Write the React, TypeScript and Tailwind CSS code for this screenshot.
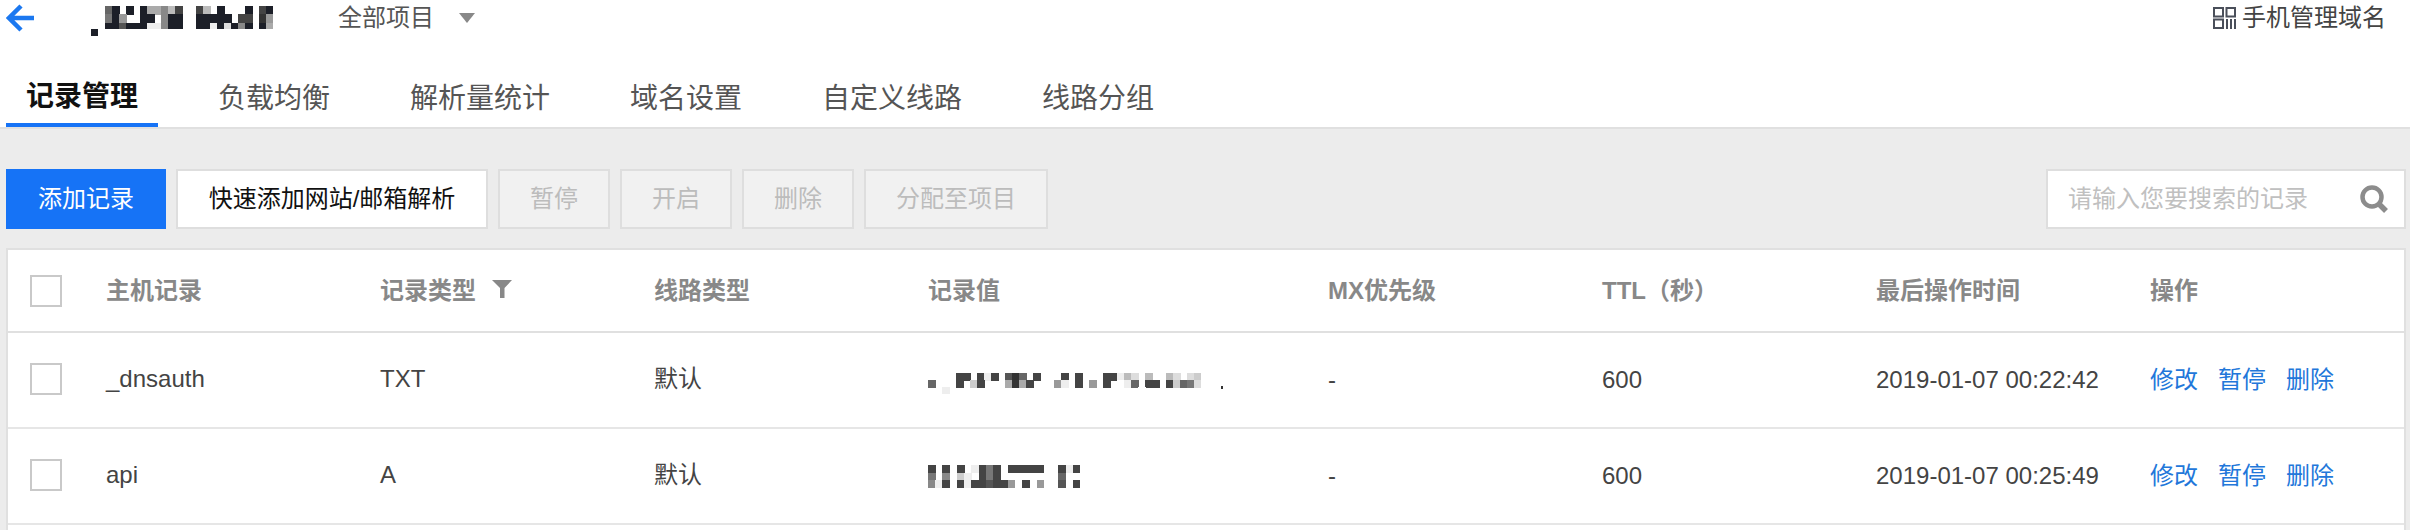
import React from "react";

const tabs = ["记录管理", "负载均衡", "解析量统计", "域名设置", "自定义线路", "线路分组"];

const gridCols =
  "grid grid-cols-[98px_274px_274px_274px_400px_274px_274px_274px_1fr] items-center";

// blurred-out values from the screenshot: one char per mosaic cell, hex digit = grey level
const nameMosaic = [
  "6x.x.xaa8b4..4b.x...x.4x",
  "7x9..xx.8xx..xxxxx.44.39",
  "xx5xxxee8xx..xxexdx8x.xa",
];
const value1Mosaic = [
  "....44.4e4.536.4..f4.4...44ebd.b..bd.dc",
  "6...4.c4...a3a4...9e.4.9.4.fe6.44.4c67d",
  "..e...........................f",
];
const value2Mosaic = [
  "4.4.4.e474.44444..4e4",
  "7.8.ce.474........6..",
  "8e4.4e445449.4.9..5.4",
];

function Mosaic({
  rows,
  cellW,
  cellH,
  className,
}: {
  rows: string[];
  cellW: number;
  cellH: number;
  className?: string;
}) {
  const cols = Math.max(...rows.map((r) => r.length));
  return (
    <svg
      width={cols * cellW}
      height={rows.length * cellH}
      className={className}
      shapeRendering="crispEdges"
    >
      {rows.map((row, y) =>
        row.split("").map((c, x) => {
          if (c === ".") return null;
          const fill = c === "x" ? "#1c1f28" : `#${c}${c}${c}`;
          return (
            <rect
              key={`${x}-${y}`}
              x={x * cellW}
              y={y * cellH}
              width={cellW + 0.5}
              height={cellH + 0.5}
              fill={fill}
            />
          );
        })
      )}
    </svg>
  );
}

function Checkbox() {
  return <div className="ml-[22px] h-8 w-8 border-2 border-[#c9c9c9] bg-white" />;
}

function ToolButton({ label, width }: { label: string; width: string }) {
  return (
    <div
      className={`flex h-[60px] items-center justify-center border-2 border-[#dedede] bg-[#f1f1f1] text-[#bcbcbc] ${width}`}
    >
      {label}
    </div>
  );
}

function Row({
  host,
  type,
  value,
  time,
}: {
  host: string;
  type: string;
  value: React.ReactNode;
  time: string;
}) {
  return (
    <div className={`${gridCols} h-24 border-b-2 border-[#e6e6e6] pb-[3px] text-[#444]`}>
      <Checkbox />
      <div>{host}</div>
      <div>{type}</div>
      <div>默认</div>
      <div>{value}</div>
      <div className="pt-[2px]">-</div>
      <div className="pt-[2px]">600</div>
      <div className="pt-[2px]">{time}</div>
      <div className="flex gap-5 pt-[2px] text-[#2277da]">
        <span>修改</span>
        <span>暂停</span>
        <span>删除</span>
      </div>
    </div>
  );
}

export default function App() {
  return (
    <div
      className="flex h-[530px] flex-col overflow-hidden bg-white text-2xl leading-8"
      style={{ fontFamily: '"Liberation Sans", "Noto Sans CJK SC", sans-serif' }}
    >
      {/* top bar */}
      <div className="flex h-9 items-center justify-between pr-6">
        <div className="flex items-center">
          <svg width="30" height="28" viewBox="0 0 30 28" className="ml-[6px]" fill="none">
            <path
              d="M15 2 L3 14 L15 26 M3 14 H28"
              stroke="#1b78f0"
              strokeWidth="4.5"
            />
          </svg>
          <div className="ml-[55px] flex h-9 w-[193px] flex-col items-start">
            <Mosaic rows={nameMosaic} cellW={7} cellH={8.3} className="ml-[14px] mt-[6px]" />
            <div className="h-2 w-[7px] bg-[#1c1f28]" />
          </div>
          <span className="ml-[54px] text-[#555]">全部项目</span>
          <svg width="16" height="10" viewBox="0 0 16 10" className="ml-[25px]">
            <path d="M0 0 H16 L8 10 Z" fill="#888" />
          </svg>
        </div>
        <div className="flex items-center gap-[6px] text-[#444]">
          <svg width="23" height="22" viewBox="0 0 23 22" fill="none" stroke="#4a4f5a" strokeWidth="2">
            <rect x="1" y="1" width="9" height="8.5" />
            <rect x="13.5" y="1" width="8.5" height="8.5" />
            <rect x="1" y="12.5" width="9" height="8.5" />
            <path d="M14 12 V22 M18 12 V22 M22 12 V22" />
          </svg>
          <span>手机管理域名</span>
        </div>
      </div>

      {/* tabs */}
      <div className="mt-[30px] flex h-[63px] gap-10 border-b-2 border-[#e0e0e0] pl-[6px]">
        {tabs.map((tab, i) => (
          <div
            key={tab}
            className={
              i === 0
                ? "flex h-[61px] items-center border-b-4 border-[#1673f6] px-5 pt-1 text-[28px] font-bold text-[#111]"
                : "flex h-[61px] items-center px-5 pt-1 text-[28px] text-[#555]"
            }
          >
            {tab}
          </div>
        ))}
      </div>

      {/* toolbar + table */}
      <div className="flex flex-1 flex-col bg-[#ececec] px-[4px]">
        <div className="flex items-center justify-between pb-[19px] pl-[2px] pt-10">
          <div className="flex gap-[10px]">
            <div className="flex h-[60px] w-40 items-center justify-center bg-[#1673f6] text-white">
              添加记录
            </div>
            <div className="flex h-[60px] w-[312px] items-center justify-center border-2 border-[#dedede] bg-white text-[#111]">
              快速添加网站/邮箱解析
            </div>
            <ToolButton label="暂停" width="w-[112px]" />
            <ToolButton label="开启" width="w-[112px]" />
            <ToolButton label="删除" width="w-[112px]" />
            <ToolButton label="分配至项目" width="w-[184px]" />
          </div>
          <div className="flex h-[60px] w-[360px] items-center border-2 border-[#dedede] bg-white pl-5 pr-4">
            <input
              placeholder="请输入您要搜索的记录"
              className="min-w-0 flex-1 bg-transparent outline-none placeholder:text-[#c0c0c0]"
            />
            <svg width="28" height="28" viewBox="0 0 28 28" fill="none" stroke="#8c8c8c">
              <circle cx="12" cy="12" r="9.5" strokeWidth="4.5" />
              <path d="M18.5 18.5 L26 26" strokeWidth="5.5" />
            </svg>
          </div>
        </div>

        <div className="ml-[2px] flex-1 border-x-2 border-t-2 border-[#e0e0e0] bg-white">
          <div className={`${gridCols} h-[83px] border-b-2 border-[#e0e0e0] font-bold text-[#888]`}>
            <Checkbox />
            <div>主机记录</div>
            <div className="flex items-center gap-4">
              记录类型
              <svg width="20" height="18" viewBox="0 0 20 18" className="mb-1">
                <path d="M0 0 H20 L12.5 8 V18 H8 V8 Z" fill="#888" />
              </svg>
            </div>
            <div>线路类型</div>
            <div>记录值</div>
            <div>MX优先级</div>
            <div>TTL（秒）</div>
            <div>最后操作时间</div>
            <div>操作</div>
          </div>
          <Row
            host="_dnsauth"
            type="TXT"
            time="2019-01-07 00:22:42"
            value={
              <div className="mt-[9px] flex items-start">
                <Mosaic rows={value1Mosaic} cellW={7} cellH={7} />
                <div className="ml-5 mt-[13px] h-[3px] w-[2px] bg-[#333]" />
              </div>
            }
          />
          <Row
            host="api"
            type="A"
            time="2019-01-07 00:25:49"
            value={<Mosaic rows={value2Mosaic} cellW={7.24} cellH={7.5} className="mt-1" />}
          />
        </div>
      </div>
    </div>
  );
}
